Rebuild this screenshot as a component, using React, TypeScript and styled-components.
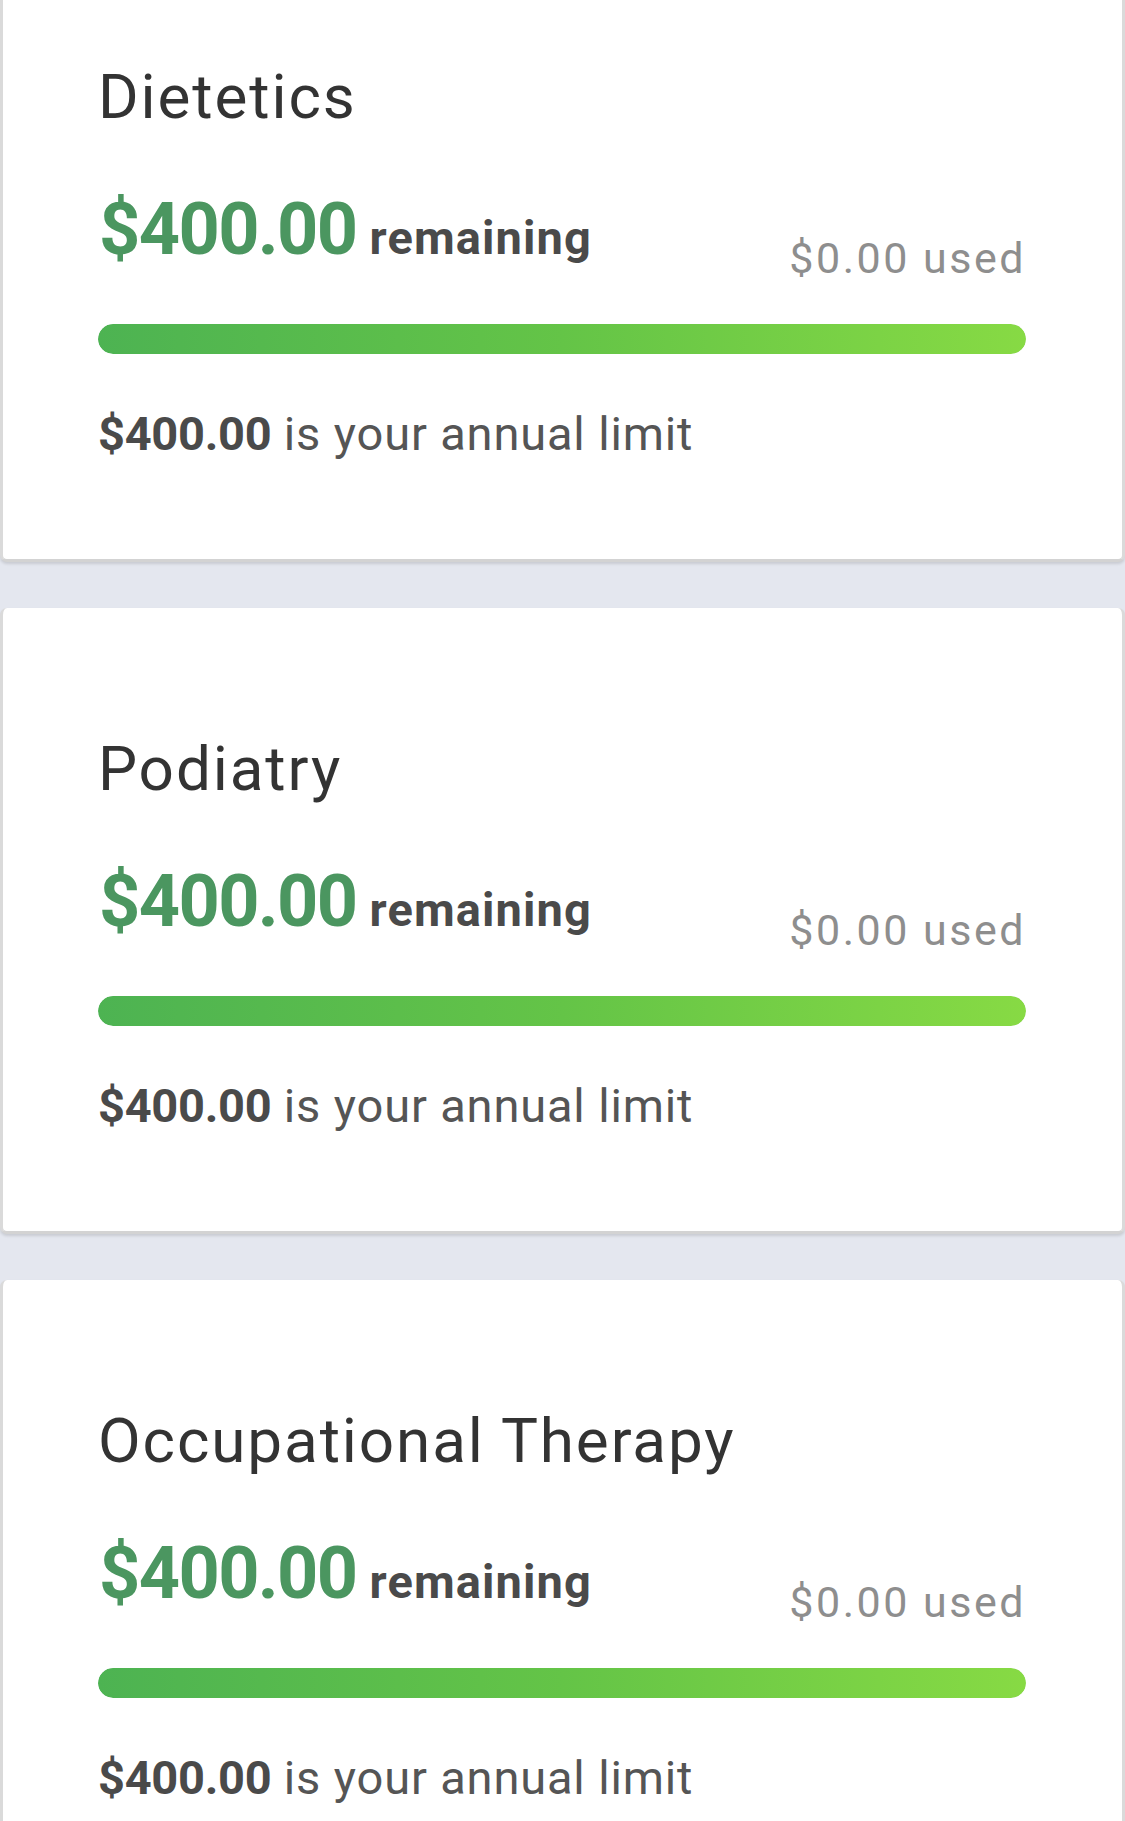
import React from "react";
import styled, { createGlobalStyle } from "styled-components";

const GlobalStyle = createGlobalStyle`
  html, body {
    margin: 0;
    padding: 0;
    background: #e4e7ef;
    overflow: hidden;
  }
  body {
    font-family: Roboto, "Liberation Sans", Arial, sans-serif;
    -webkit-font-smoothing: antialiased;
  }
`;

const List = styled.div`
  display: flex;
  flex-direction: column;
  gap: 46px;
  margin-top: -64px;
`;

const Card = styled.section`
  background: #ffffff;
  border-left: 3px solid #dadada;
  border-right: 3px solid #dadada;
  border-bottom: 3px solid #d3d3d3;
  border-radius: 7px;
  box-shadow: 0 2px 3px rgba(0, 0, 0, 0.12);
  padding: 130px 96px 98px 95px;
  display: flex;
  flex-direction: column;
  height: 626px;
  box-sizing: border-box;
`;

const Title = styled.h2`
  margin: 0;
  font-size: 62px;
  line-height: 62px;
  font-weight: 400;
  letter-spacing: 1.9px;
  color: #333333;
  white-space: nowrap;
`;

const AmountRow = styled.div`
  display: flex;
  justify-content: space-between;
  align-items: flex-start;
  margin-top: 66px;
`;

const Remaining = styled.div`
  font-size: 72px;
  line-height: 72px;
  white-space: nowrap;
  padding-left: 1px;
`;

const BigAmount = styled.span`
  font-weight: 700;
  color: #4b9660;
  letter-spacing: -1.6px;
`;

const RemainingLabel = styled.span`
  font-size: 47px;
  font-weight: 700;
  color: #4a4a4a;
  margin-left: 13px;
  letter-spacing: 1.1px;
`;

const Used = styled.div`
  margin-top: 42px;
  font-size: 43px;
  line-height: 44px;
  color: #8e8e8e;
  letter-spacing: 2.5px;
  white-space: nowrap;
`;

const Track = styled.div`
  margin-top: 44px;
  height: 30px;
  border-radius: 15px;
  background: #eef0f3;
  overflow: hidden;
`;

const Fill = styled.div`
  height: 100%;
  border-radius: 15px;
  background: linear-gradient(90deg, #4db352 0%, #64c447 50%, #87da44 100%);
`;

const Limit = styled.p`
  margin: 56px 0 0;
  font-size: 47px;
  line-height: 47px;
  color: #555555;
  letter-spacing: 0.85px;
  white-space: nowrap;
  padding-left: 0;
`;

const LimitAmount = styled.strong`
  font-weight: 700;
  color: #4a4a4a;
  letter-spacing: -0.3px;
`;

type Benefit = {
  name: string;
  limit: number;
  used: number;
};

const benefits: Benefit[] = [
  { name: "Dietetics", limit: 400, used: 0 },
  { name: "Podiatry", limit: 400, used: 0 },
  { name: "Occupational Therapy", limit: 400, used: 0 },
];

const money = (n: number) => `$${n.toFixed(2)}`;

function BenefitCard({ b }: { b: Benefit }) {
  const remaining = b.limit - b.used;
  const pct = b.limit > 0 ? (remaining / b.limit) * 100 : 0;
  return (
    <Card>
      <Title>{b.name}</Title>
      <AmountRow>
        <Remaining>
          <BigAmount>{money(remaining)}</BigAmount>
          <RemainingLabel>remaining</RemainingLabel>
        </Remaining>
        <Used>{money(b.used)} used</Used>
      </AmountRow>
      <Track>
        <Fill style={{ width: `${pct}%` }} />
      </Track>
      <Limit>
        <LimitAmount>{money(b.limit)}</LimitAmount> is your annual limit
      </Limit>
    </Card>
  );
}

export default function App() {
  return (
    <>
      <GlobalStyle />
      <List>
        {benefits.map((b) => (
          <BenefitCard key={b.name} b={b} />
        ))}
      </List>
    </>
  );
}
